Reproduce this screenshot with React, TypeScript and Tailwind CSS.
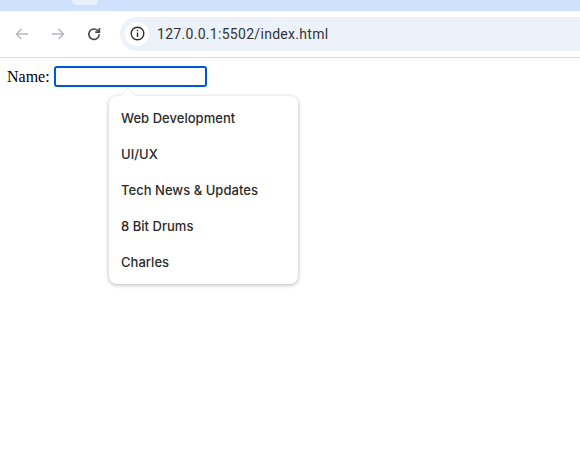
import React from "react";

const items = ["Web Development", "UI/UX", "Tech News & Updates", "8 Bit Drums", "Charles"];

function Arrow({ flip }: { flip?: boolean }) {
  return (
    <svg width="16" height="16" viewBox="0 0 16 16" fill="none" stroke="#b4b7bb" strokeWidth="1.5" className={flip ? "rotate-180" : ""}>
      <path d="M14 8H2.5M7.5 3L2.5 8l5 5" />
    </svg>
  );
}

export default function App() {
  return (
    <div className="relative w-[580px] h-[456px] bg-white overflow-hidden">
      <div className="h-[11px] bg-[#d0e1fd] pl-[72px]">
        <div className="w-[26px] h-[5px] bg-[#e9f1fe] rounded-b-lg" />
      </div>
      <div className="h-[47px] bg-white rounded-tl-lg border-b border-[#dcdcdc] flex items-center pl-[14px] pb-px">
        <Arrow />
        <div className="ml-[20px]"><Arrow flip /></div>
        <svg className="ml-[20px]" width="16" height="16" viewBox="0 0 16 16" fill="none" stroke="#474747" strokeWidth="1.6">
          <path d="M13.2 8.2a5.2 5.2 0 1 1-1.6-3.8L13.2 6" />
          <path d="M13.4 1.9V6.1H9.2" fill="none" />
        </svg>
        <div className="ml-[18px] flex-1 h-[34px] bg-[#edf2fa] rounded-l-[17px] flex items-center pl-[5px]">
          <div className="w-[24px] h-[24px] rounded-full bg-white flex items-center justify-center">
            <svg width="15" height="15" viewBox="0 0 15 15" fill="none" stroke="#303030" strokeWidth="1.4">
              <circle cx="7.5" cy="7.5" r="6.3" />
              <path d="M7.5 6.6v4.4M7.5 3.8v1.5" />
            </svg>
          </div>
          <span className="ml-[8px] pt-px text-[14px] tracking-[0.3px] text-[#303336] font-['Roboto',sans-serif]">127.0.0.1:5502/index.html</span>
        </div>
      </div>
      <div className="pl-[7px] pt-[8px] flex items-center h-[29px] font-['Liberation_Serif',serif] text-[16px] text-black">
        <span>Name:</span>
        <input className="ml-[4px] w-[153px] h-[21px] rounded-[3px] border-2 border-[#0057d6] outline-none bg-white" />
      </div>
      <div className="absolute left-[109px] top-[96px] w-[189px] h-[188px] bg-white rounded-lg shadow-[0_1px_4px_rgba(0,0,0,0.3)] pt-[5px]">
        <div className="absolute left-[14px] -top-[5px] w-[10px] h-[10px] bg-white rotate-45 rounded-tl-[1px] shadow-[-1px_-1px_1px_rgba(0,0,0,0.05)]" />
        <div className="relative flex flex-col font-['Inter',sans-serif] text-[13px] font-medium text-[#2a2a2a]">
          {items.map((t) => (
            <div key={t} className="h-[36px] flex items-center pl-[12px] tracking-[0.03px]">{t}</div>
          ))}
        </div>
      </div>
    </div>
  );
}
